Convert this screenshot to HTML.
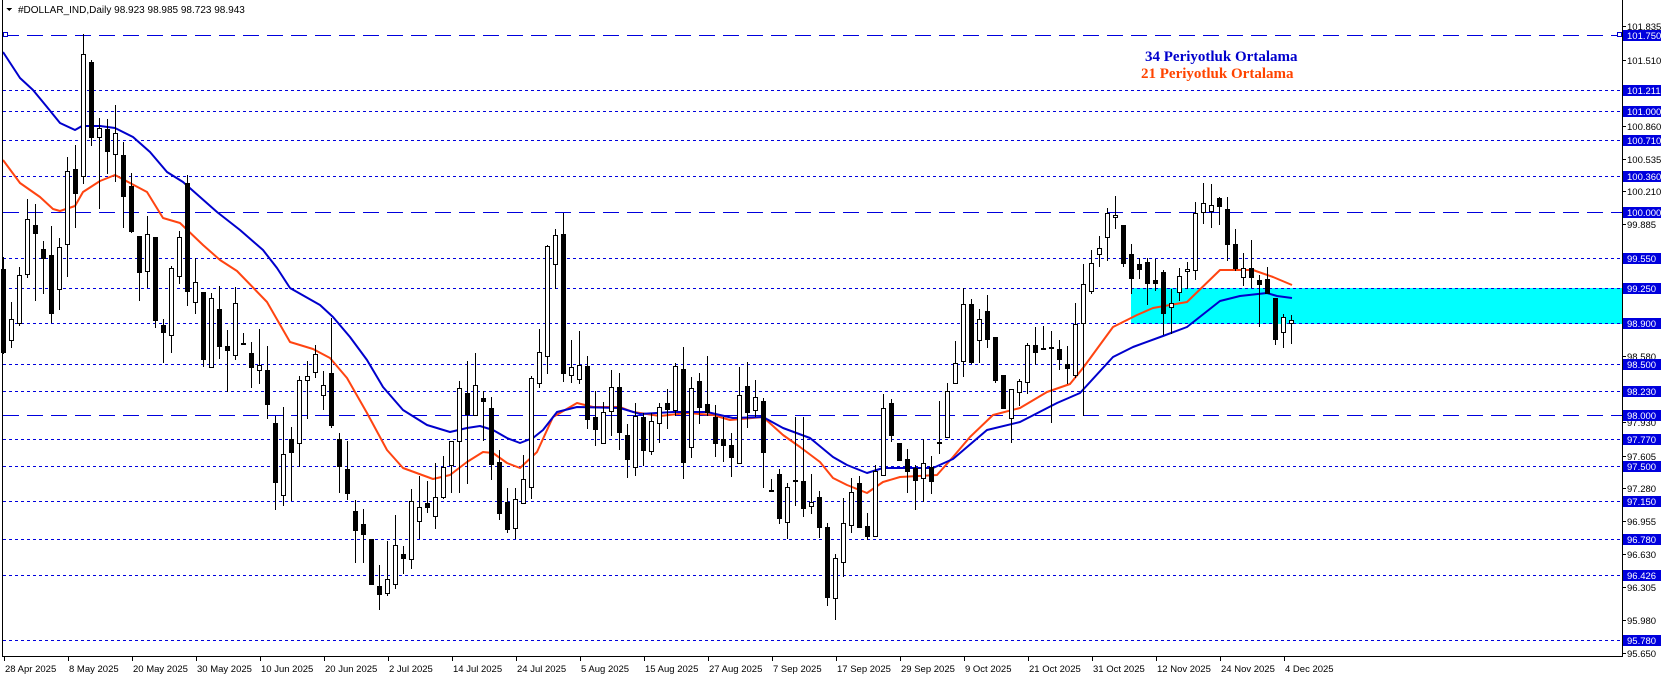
<!DOCTYPE html>
<html><head><meta charset="utf-8"><style>
html,body{margin:0;padding:0;background:#fff;width:1662px;height:677px;overflow:hidden}
svg{display:block}
text{font-family:"Liberation Sans",sans-serif;font-size:9.5px}
</style></head><body>
<svg id="c" width="1662" height="677" xmlns="http://www.w3.org/2000/svg" shape-rendering="crispEdges">
<rect x="1131" y="288" width="491" height="36" fill="#00ffff"/>
<g id="lines"></g>
<g id="ma" shape-rendering="auto"></g>
<g id="cand"></g>
<line x1="2.5" y1="0" x2="2.5" y2="656" stroke="#000"/>
<line x1="1622.5" y1="0" x2="1622.5" y2="656" stroke="#000"/>
<line x1="2" y1="656.5" x2="1623" y2="656.5" stroke="#000"/>
<rect x="3.5" y="32.5" width="4" height="4" fill="#fff" stroke="#0000cc"/>
<rect x="1617.5" y="32.5" width="4" height="4" fill="#fff" stroke="#0000cc"/>
<g id="axis"></g>
<polygon points="6,8 12,8 9,11" fill="#000"/>
<text x="18" y="13" style="font-size:10px">#DOLLAR_IND,Daily  98.923 98.985 98.723 98.943</text>
<text x="1145" y="61" style="font-family:'Liberation Serif',serif;font-weight:bold;font-size:15px;fill:#0000cc">34 Periyotluk Ortalama</text>
<text x="1141" y="78" style="font-family:'Liberation Serif',serif;font-weight:bold;font-size:15px;fill:#ff4400">21 Periyotluk Ortalama</text>
</svg>
<script>
var NS="http://www.w3.org/2000/svg";
function el(p,t,a,txt){var e=document.createElementNS(NS,t);for(var k in a)e.setAttribute(k,a[k]);if(txt!=null)e.textContent=txt;p.appendChild(e);return e;}
var lines=document.getElementById('lines'),axis=document.getElementById('axis');
var hl=[["101.750",35,1],["101.211",90,0],["101.000",111,0],["100.710",140,0],["100.360",176,0],["100.000",212,1],["99.550",258,0],["99.250",288,0],["98.900",323,0],["98.500",364,0],["98.230",391,0],["98.000",415,1],["97.770",439,0],["97.500",466,0],["97.150",501,0],["96.780",539,0],["96.426",575,0],["95.780",640,0]];
hl.forEach(function(h){
 el(lines,'line',{x1:3,y1:h[1]+.5,x2:1622,y2:h[1]+.5,stroke:'#0000dd','stroke-dasharray':h[2]?'16,8':'3,3'});
});
var pl=[["101.835",26],["101.510",60],["100.860",126],["100.535",159],["100.210",191],["99.885",224],["98.580",356],["97.930",422],["97.605",456],["97.280",488],["96.955",521],["96.630",554],["96.305",587],["95.980",620],["95.650",653]];
pl.forEach(function(p){el(axis,'line',{x1:1622,y1:p[1]+.5,x2:1626,y2:p[1]+.5,stroke:'#000'});el(axis,'text',{x:1627,y:p[1]+4},p[0]);});
hl.forEach(function(h){el(axis,'rect',{x:1623,y:h[1]-5,width:38,height:11,fill:'#0000dd'});el(axis,'text',{x:1627,y:h[1]+4,fill:'#fff'},h[0]);});
var dates=["28 Apr 2025","8 May 2025","20 May 2025","30 May 2025","10 Jun 2025","20 Jun 2025","2 Jul 2025","14 Jul 2025","24 Jul 2025","5 Aug 2025","15 Aug 2025","27 Aug 2025","7 Sep 2025","17 Sep 2025","29 Sep 2025","9 Oct 2025","21 Oct 2025","31 Oct 2025","12 Nov 2025","24 Nov 2025","4 Dec 2025"];
dates.forEach(function(d,i){var x=4+64*i;el(axis,'line',{x1:x+.5,y1:656,x2:x+.5,y2:661,stroke:'#000'});el(axis,'text',{x:x+1,y:672},d);});
var D=[[269,352,257,353,0],[319,340,302,347,1],[275,323,267,325,1],[219,274,199,277,1],[225,233,204,300,0],[249,258,241,293,0],[255,313,226,322,0],[247,289,238,309,1],[171,244,157,276,1],[169,193,145,227,0],[54,176,34,183,1],[62,137,60,145,0],[128,137,118,208,1],[129,151,119,173,0],[133,154,105,181,1],[155,196,142,227,0],[186,231,173,232,0],[236,272,236,300,0],[234,271,216,287,1],[237,320,237,327,0],[325,332,319,362,0],[268,335,266,352,1],[237,276,231,283,1],[183,291,175,305,0],[282,302,258,313,1],[292,359,292,366,0],[298,367,293,367,1],[309,346,286,358,0],[346,350,330,391,0],[303,355,287,359,1],[343,343,333,343,1],[353,367,342,387,0],[365,370,329,383,1],[370,404,346,418,0],[423,482,416,509,0],[454,495,407,505,1],[439,452,427,500,0],[380,443,376,466,1],[376,380,361,418,1],[354,372,345,377,1],[385,395,371,409,1],[373,425,318,427,0],[439,466,433,492,0],[469,493,441,499,0],[511,530,500,562,0],[524,534,509,562,0],[539,584,539,584,0],[586,594,565,609,0],[579,593,541,595,1],[545,584,515,588,1],[554,558,546,573,0],[501,559,489,568,1],[507,521,476,538,1],[503,507,481,512,0],[497,516,463,528,1],[467,497,456,498,1],[441,465,441,492,1],[388,441,381,492,1],[393,414,361,483,0],[385,415,353,415,1],[398,401,391,440,0],[408,464,397,479,0],[462,513,450,519,0],[502,529,488,532,0],[499,528,488,538,1],[479,503,455,503,1],[378,487,376,498,1],[352,383,329,387,1],[246,356,245,373,1],[235,264,229,288,1],[234,373,213,381,0],[367,375,340,382,1],[365,379,331,383,1],[366,419,356,428,0],[417,429,391,445,0],[412,443,402,443,1],[387,411,370,435,1],[387,432,373,449,0],[435,459,424,477,0],[416,467,403,475,1],[417,450,413,465,0],[421,451,413,454,1],[407,423,403,442,1],[403,409,389,428,0],[366,410,363,415,1],[369,462,347,478,0],[388,447,377,457,1],[381,407,373,423,0],[404,412,356,415,0],[417,443,405,456,0],[439,445,417,461,0],[445,457,433,476,0],[395,463,367,463,1],[386,412,362,427,0],[397,410,380,416,1],[401,452,398,487,0],[490,490,479,490,1],[474,518,469,523,0],[487,522,483,538,1],[480,480,417,505,1],[481,508,417,516,0],[502,506,474,513,1],[497,527,491,537,0],[527,597,523,605,0],[558,598,554,619,1],[523,562,498,576,1],[492,525,478,532,1],[483,527,476,527,0],[526,536,513,539,0],[471,536,465,536,1],[408,475,394,475,1],[403,435,399,441,0],[443,460,443,460,0],[459,471,449,492,0],[468,480,465,509,0],[463,478,439,501,1],[467,481,456,493,0],[442,442,401,453,1],[391,437,383,437,1],[363,383,341,383,1],[304,361,288,376,1],[304,362,299,363,0],[319,340,309,362,1],[311,339,295,347,0],[337,380,337,382,0],[375,408,375,408,0],[389,418,389,442,1],[381,392,379,405,1],[345,382,343,393,1],[345,352,327,364,0],[348,348,326,348,1],[347,348,331,422,1],[349,359,340,369,0],[364,368,346,383,0],[324,375,303,377,1],[284,323,264,415,1],[263,291,250,293,1],[248,254,236,266,1],[213,237,208,260,1],[215,217,196,228,1],[225,263,225,266,0],[254,278,244,293,0],[264,269,258,278,0],[262,283,258,304,0],[280,283,259,290,0],[272,313,270,334,0],[303,307,289,333,1],[276,292,268,300,1],[269,271,262,288,1],[213,270,202,279,1],[203,212,183,223,1],[205,211,184,227,1],[198,206,197,224,0],[209,244,197,260,0],[244,268,229,270,0],[268,277,253,285,1],[268,277,240,287,0],[280,284,275,326,0],[279,293,267,293,0],[298,339,298,344,0],[317,332,314,347,1],[320,323,315,343,1]];
var ma=document.getElementById('ma');
var blue=[[3,52],[20,78],[33,90],[47,107],[60,123],[75,130],[82,126],[100,126],[115,128],[133,137],[150,152],[167,172],[183,182],[200,197],[217,212],[240,230],[263,250],[277,268],[290,288],[320,305],[333,317],[350,337],[367,360],[383,387],[403,410],[427,425],[450,432],[467,428],[480,426],[493,430],[507,438],[520,443],[533,438],[543,430],[557,412],[577,407],[620,408],[640,414],[673,412],[707,412],[733,418],[763,417],[783,428],[810,438],[833,457],[847,465],[867,473],[883,468],[933,468],[953,459],[987,430],[1020,422],[1057,403],[1080,393],[1113,357],[1133,347],[1163,336],[1187,327],[1220,301],[1240,296],[1267,293],[1277,296],[1292,298]];
var red=[[3,160],[20,183],[40,197],[53,209],[60,211],[75,206],[83,192],[100,181],[115,175],[130,183],[147,192],[163,218],[180,223],[203,245],[220,260],[237,271],[267,302],[290,342],[313,349],[330,358],[347,378],[367,413],[387,450],[403,468],[433,479],[450,475],[467,462],[483,452],[493,453],[507,463],[520,468],[537,452],[553,417],[577,403],[593,407],[620,407],[633,412],[660,416],[687,413],[713,415],[730,420],[763,417],[783,435],[800,447],[820,462],[833,478],[847,485],[867,493],[883,482],[900,477],[937,475],[953,457],[970,437],[993,415],[1020,408],[1047,392],[1070,384],[1083,368],[1113,327],[1137,315],[1153,308],[1187,302],[1220,270],[1253,270],[1273,277],[1292,285]];
function pts(a){return a.map(function(p){return p[0]+','+p[1];}).join(' ');}
el(ma,'polyline',{points:pts(red),fill:'none',stroke:'#ff4411','stroke-width':2,'stroke-linejoin':'round'});
el(ma,'polyline',{points:pts(blue),fill:'none',stroke:'#0000cc','stroke-width':2,'stroke-linejoin':'round'});
var cg=document.getElementById('cand');
D.forEach(function(d,i){
 var cx=4+8*i;
 el(cg,'line',{x1:cx-.5,y1:d[2],x2:cx-.5,y2:d[3]+1,stroke:'#000'});
 var h=Math.max(1,d[1]-d[0]);
 if(d[4]){el(cg,'rect',{x:cx-2.5,y:d[0]+.5,width:4,height:h,fill:'#fff',stroke:'#000'});}
 else{el(cg,'rect',{x:cx-3,y:d[0],width:5,height:h+1,fill:'#000'});}
});
</script>
</body></html>
